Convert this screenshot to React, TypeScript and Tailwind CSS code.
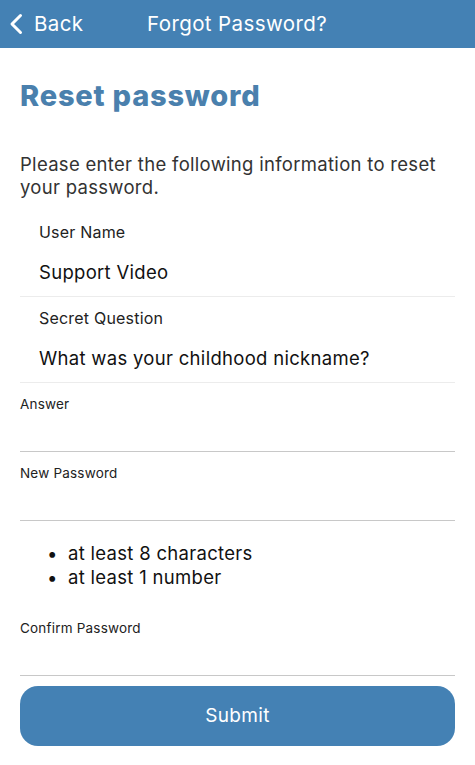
import React from "react";

const font = { fontFamily: "Inter, 'Noto Sans', sans-serif" };

function ReadField({ label, value }: { label: string; value: string }) {
    return (
        <div className="border-b border-[#ececec]">
            <div className="pl-[19px] pt-[10px] text-[16px] leading-[22px] tracking-[0.2px] text-[#222]">{label}</div>
            <div className="pl-[19px] pt-[17px] pb-[12px] text-[18.5px] leading-[24px] tracking-[0.3px] text-[#111]">{value}</div>
        </div>
    );
}

function InputField({ label }: { label: string }) {
    return (
        <div className="border-b border-[#c8c8c8] h-[69px]">
            <div className="pt-[12px] text-[13.5px] leading-[18px] tracking-[0.2px] text-[#222]">{label}</div>
        </div>
    );
}

export default function App() {
    return (
        <div className="w-[475px] h-[765px] bg-white flex flex-col" style={font}>
            {/* Header */}
            <div className="h-[48px] bg-[#4481b4] flex items-center text-white text-[20.5px] tracking-[0.4px]">
                <div className="flex items-center pl-[9px] w-[147px]">
                    <svg width="14" height="22" viewBox="0 0 14 22" fill="none">
                        <path d="M11.5 2.5 L3 11 L11.5 19.5" stroke="white" strokeWidth="3" strokeLinecap="round" strokeLinejoin="round" />
                    </svg>
                    <span className="ml-[11px]">Back</span>
                </div>
                <span>Forgot Password?</span>
            </div>

            <div className="px-[20px] flex flex-col">
                <h1 className="mt-[31px] text-[29px] leading-[34px] font-extrabold tracking-[0.8px] text-[#4a80ad]">Reset password</h1>

                <p className="mt-[40px] text-[18.5px] leading-[23px] tracking-[0.3px] text-[#333]">
                    Please enter the following information to reset your password.
                </p>

                <div className="mt-[12px]">
                    <ReadField label="User Name" value="Support Video" />
                    <ReadField label="Secret Question" value="What was your childhood nickname?" />
                </div>

                <InputField label="Answer" />
                <InputField label="New Password" />

                <ul className="mt-[20px] pl-[27px] text-[18.5px] leading-[24px] tracking-[0.3px] text-[#111]">
                    <li className="flex items-center">
                        <span className="w-[21px]">•</span>at least 8 characters
                    </li>
                    <li className="flex items-center">
                        <span className="w-[21px]">•</span>at least 1 number
                    </li>
                </ul>

                <div className="mt-[18px]">
                    <InputField label="Confirm Password" />
                </div>

                <button className="mt-[10px] h-[60px] rounded-[18px] bg-[#4481b4] text-white text-[19px] tracking-[0.3px]">
                    Submit
                </button>
            </div>
        </div>
    );
}
